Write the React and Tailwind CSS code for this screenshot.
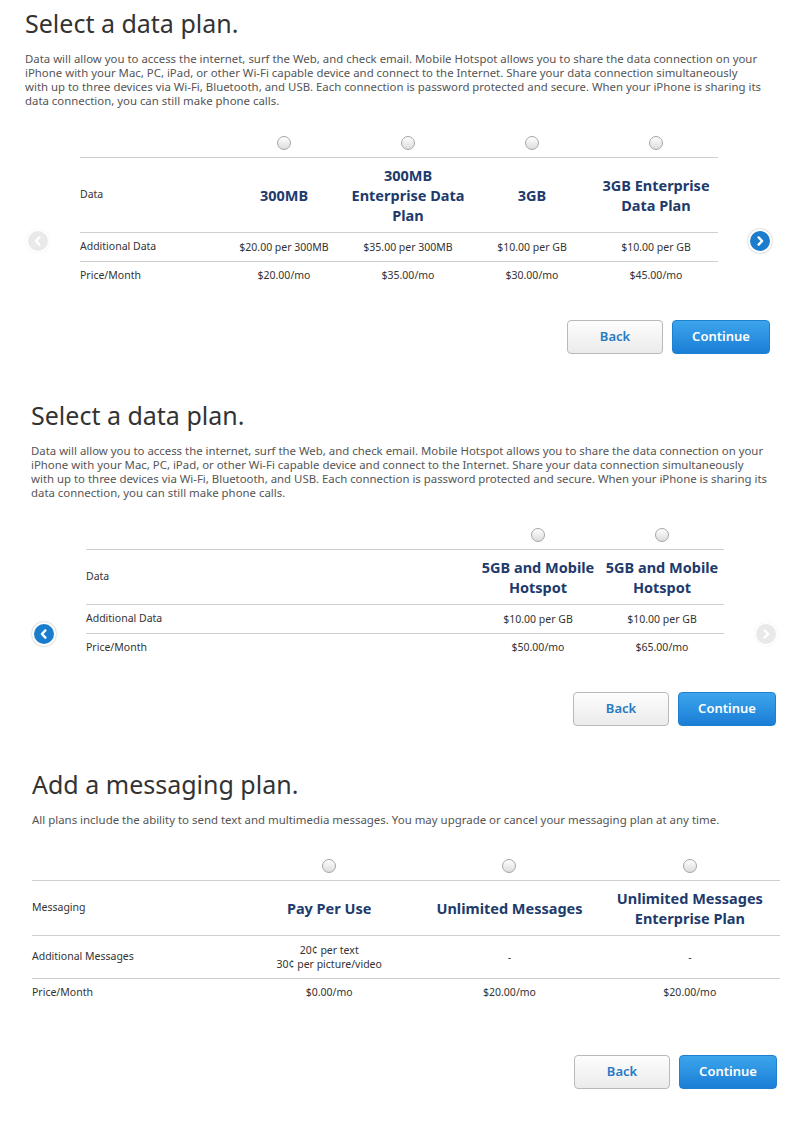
import clsx from "clsx";

const dataPlansA = [
  { name: "300MB", extra: "$20.00 per 300MB", price: "$20.00/mo" },
  { name: <>300MB<br />Enterprise Data<br />Plan</>, extra: "$35.00 per 300MB", price: "$35.00/mo" },
  { name: "3GB", extra: "$10.00 per GB", price: "$30.00/mo" },
  { name: <>3GB Enterprise<br />Data Plan</>, extra: "$10.00 per GB", price: "$45.00/mo" },
];

const dataPlansB = [
  { name: <>5GB and Mobile<br />Hotspot</>, extra: "$10.00 per GB", price: "$50.00/mo" },
  { name: <>5GB and Mobile<br />Hotspot</>, extra: "$10.00 per GB", price: "$65.00/mo" },
];

const msgPlans = [
  { name: "Pay Per Use", extra: <>20¢ per text<br />30¢ per picture/video</>, price: "$0.00/mo" },
  { name: "Unlimited Messages", extra: "-", price: "$20.00/mo" },
  { name: <>Unlimited Messages<br />Enterprise Plan</>, extra: "-", price: "$20.00/mo" },
];

function Radio() {
  return (
    <span className="block w-[14px] h-[14px] rounded-full border border-[#a5a5a5] bg-linear-to-b from-white to-[#dcdcdc]" />
  );
}

function Arrow({ dir, active }) {
  return (
    <span
      className={clsx(
        "flex items-center justify-center w-[24px] h-[24px] rounded-full bg-white",
        active ? "shadow-[0_0_2px_rgba(0,0,0,0.35)]" : "shadow-[0_0_1px_rgba(0,0,0,0.12)]"
      )}
    >
      <span
        className={clsx(
          "flex items-center justify-center w-[20px] h-[20px] rounded-full",
          active ? "bg-[#1a7ccc]" : "bg-[#e9e9e9]"
        )}
      >
        <svg width="12" height="12" viewBox="0 0 12 12">
          <path
            d={dir === "left" ? "M7.4 2.4 L3.9 6 L7.4 9.6" : "M4.6 2.4 L8.1 6 L4.6 9.6"}
            fill="none"
            stroke="white"
            strokeWidth="2.4"
            strokeLinecap="round"
            strokeLinejoin="round"
          />
        </svg>
      </span>
    </span>
  );
}

function Buttons({ className }) {
  return (
    <div className={clsx("flex justify-end gap-[9px] w-[745px]", className)}>
      <button className="w-[96px] h-[34px] rounded-[4px] border border-[#b9b9b9] bg-linear-to-b from-[#fdfdfd] to-[#ebebeb] text-[13px] font-semibold text-[#2779c4]">
        Back
      </button>
      <button className="w-[98px] h-[34px] rounded-[4px] border border-[#1f80d2] bg-linear-to-b from-[#3ca5ec] to-[#1a7ed6] text-[13px] font-semibold text-white">
        Continue
      </button>
    </div>
  );
}

function PlanTable({ cols, plans, labels, headH, extraH }) {
  return (
    <div className="text-[#333]">
      <div className={clsx("grid h-[28px] items-center", cols)}>
        <div />
        {plans.map((p, i) => (
          <div key={i} className="flex justify-center">
            <Radio />
          </div>
        ))}
      </div>
      <div className={clsx("grid items-center border-t border-[#cfcfcf]", cols, headH)}>
        <div className="text-[10.5px]">{labels[0]}</div>
        {plans.map((p, i) => (
          <div key={i} className="text-center text-[14.5px] leading-[20px] font-bold text-[#213a6c] whitespace-nowrap">
            {p.name}
          </div>
        ))}
      </div>
      <div className={clsx("grid items-center border-t border-[#cfcfcf]", cols, extraH)}>
        <div className="text-[10.5px]">{labels[1]}</div>
        {plans.map((p, i) => (
          <div key={i} className="text-center text-[10.5px] leading-[14px]">
            {p.extra}
          </div>
        ))}
      </div>
      <div className={clsx("grid items-center h-[29px] border-t border-[#cfcfcf]", cols)}>
        <div className="text-[10.5px]">{labels[2]}</div>
        {plans.map((p, i) => (
          <div key={i} className="text-center text-[10.5px]">
            {p.price}
          </div>
        ))}
      </div>
    </div>
  );
}

const dataIntro = (
  <>
    Data will allow you to access the internet, surf the Web, and check email. Mobile Hotspot allows you to share the data connection on your
    <br />
    iPhone with your Mac, PC, iPad, or other Wi-Fi capable device and connect to the Internet. Share your data connection simultaneously
    <br />
    with up to three devices via Wi-Fi, Bluetooth, and USB. Each connection is password protected and secure. When your iPhone is sharing its
    <br />
    data connection, you can still make phone calls.
  </>
);

export default function App() {
  return (
    <div className="w-[800px] min-h-[1131px] bg-white font-['Noto_Sans',sans-serif] text-[#333]">
      {/* first data plan page */}
      <section className="pl-[25px] pt-[7px]">
        <h1 className="text-[25px] leading-[32px] text-[#333]">Select a data plan.</h1>
        <p className="mt-[13px] text-[11.4px] leading-[14px] text-[#555] whitespace-nowrap">{dataIntro}</p>
        <div className="mt-[21px] flex items-start">
          <div className="w-[55px] pt-[100px] pl-[1px]">
            <Arrow dir="left" />
          </div>
          <div className="w-[638px]">
            <PlanTable
              cols="grid-cols-[142px_repeat(4,124px)]"
              plans={dataPlansA}
              labels={["Data", "Additional Data", "Price/Month"]}
              headH="h-[75px]"
              extraH="h-[29px]"
            />
          </div>
          <div className="pl-[30px] pt-[100px]">
            <Arrow dir="right" active />
          </div>
        </div>
        <Buttons className="mt-[30px]" />
      </section>

      {/* second data plan page */}
      <section className="pl-[31px] pt-[45px]">
        <h1 className="text-[25px] leading-[32px] text-[#333]">Select a data plan.</h1>
        <p className="mt-[13px] text-[11.4px] leading-[14px] text-[#555] whitespace-nowrap">{dataIntro}</p>
        <div className="mt-[21px] flex items-start">
          <div className="w-[55px] pt-[101px] pl-[1px]">
            <Arrow dir="left" active />
          </div>
          <div className="w-[638px]">
            <PlanTable
              cols="grid-cols-[390px_repeat(2,124px)]"
              plans={dataPlansB}
              labels={["Data", "Additional Data", "Price/Month"]}
              headH="h-[55px]"
              extraH="h-[29px]"
            />
          </div>
          <div className="pl-[30px] pt-[101px]">
            <Arrow dir="right" />
          </div>
        </div>
        <Buttons className="mt-[30px]" />
      </section>

      {/* messaging plan */}
      <section className="pl-[32px] pt-[42px] pb-[40px]">
        <h1 className="text-[25px] leading-[32px] text-[#333]">Add a messaging plan.</h1>
        <p className="mt-[13px] text-[11.45px] leading-[14px] text-[#555] whitespace-nowrap">
          All plans include the ability to send text and multimedia messages. You may upgrade or cancel your messaging plan at any time.
        </p>
        <div className="mt-[25px] w-[748px]">
          <PlanTable
            cols="grid-cols-[207px_repeat(3,1fr)]"
            plans={msgPlans}
            labels={["Messaging", "Additional Messages", "Price/Month"]}
            headH="h-[55px]"
            extraH="h-[43px]"
          />
        </div>
        <Buttons className="mt-[48px]" />
      </section>
    </div>
  );
}
